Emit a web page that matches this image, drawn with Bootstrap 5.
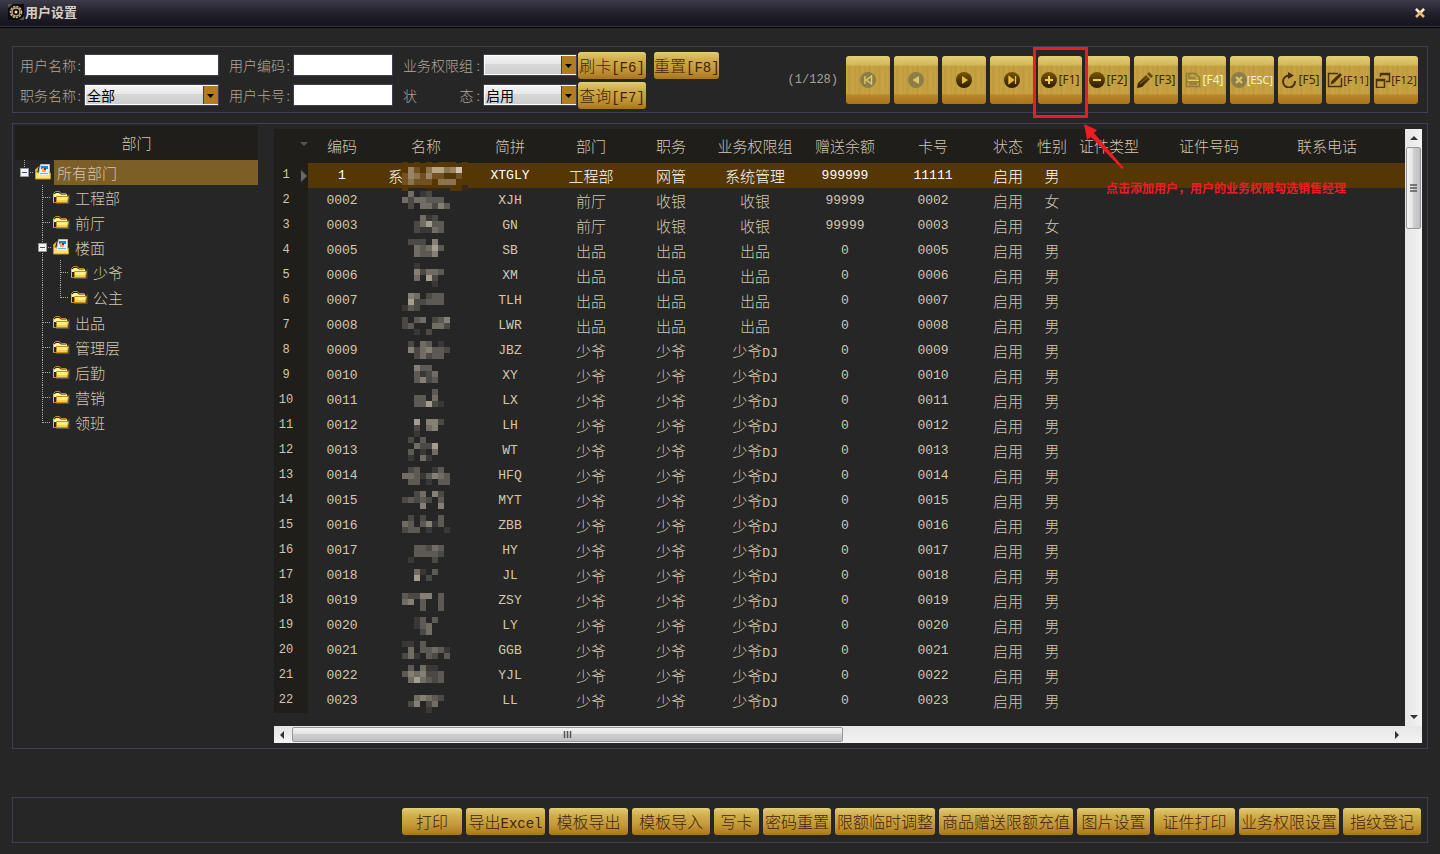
<!DOCTYPE html>
<html lang="zh-CN">
<head>
<meta charset="utf-8">
<meta name="viewport" content="width=device-width, initial-scale=1">
<title>用户设置</title>
<link href="https://cdn.jsdelivr.net/npm/bootstrap@5.3.0/dist/css/bootstrap.min.css" rel="stylesheet">
<style>
:root{--edge:#403d54;--ink:#d3c6b0;--panel:#262626;--dark:#1f1e1a}
body{background:var(--panel);color:var(--ink);font-family:"Noto Sans CJK SC",sans-serif;font-size:15px;font-weight:300;line-height:25px;min-height:100vh}
.titlebar{height:28px;background:linear-gradient(#3d3b49,#22202c 50%,#14131c);border-bottom:1px solid #000;box-shadow:inset 0 -1px #383645;padding:0 12px 4px 8px}
.titlebar h1{font-size:13px;line-height:20px;font-weight:700;color:#d8cec4;margin:0 0 0 1px}
.close-x{border:0;background:none;padding:0;line-height:0}
.frame{border:1px solid var(--edge)}
.frame-filter{margin:18px 12px 0;padding:4px 9px 3px 7px}
.fields{display:grid;grid-template-columns:209px 174px 175px auto;row-gap:2px}
.field{display:flex;align-items:center;height:28px;margin-right:10px}
.field.wide{margin-right:1px}
.field label{color:#b0a69b;font-size:14px;line-height:20px;display:flex;justify-content:space-between;padding-right:3px;width:64px;flex:none;white-space:nowrap}
.field.wide label{width:80px}
.field input,.field select{flex:1;min-width:0;height:22px;border:1px solid var(--edge);border-radius:0;background-color:#fff;color:#000;font-size:14px;line-height:18px;padding:0 2px;outline:0}
.field select{appearance:none;background:url("data:image/svg+xml,%3Csvg xmlns='http://www.w3.org/2000/svg' width='15' height='20'%3E%3Cpath fill='%23b27d22' d='M1 0h14v20H1z'/%3E%3Cpath fill='%23403d54' d='M0 0h1v20H0z'/%3E%3Cpath d='M4 9h7l-3.500 4z'/%3E%3C/svg%3E") right center no-repeat,linear-gradient(#f4f4f4,#e8e8e8 45%,#d8d8d8 46%,#cdcdcd);box-shadow:inset 1px 1px #fff,inset 0 -1px #fff}
.gold{border:0;border-radius:3px;padding:0;color:#43230a;font-size:16px;font-weight:300;line-height:27px;height:27px;white-space:nowrap;background:linear-gradient(#e0cb70,#cfac49 30%,#c39a3b 62%,#ab7517);box-shadow:inset 0 1px #e9da8e55}
.gold small,.latin{font-family:"Liberation Mono",monospace;font-size:14px;line-height:1;font-weight:400}
.gold:hover{filter:brightness(1.1)}
.b-45{width:45px}.b-60{width:60px}.b-65{width:65px}.b-68{width:68px}.b-73{width:73px}.b-78{width:78px}.b-79{width:79px}.b-81{width:81px}.b-100{width:100px}.b-134{width:134px}
.tool{width:44px;height:48px;border:0;border-radius:3px;padding:0;display:flex;align-items:center;justify-content:center;gap:2px;white-space:nowrap;color:#43230a;font:12px/16px "Noto Sans",sans-serif;background:linear-gradient(#e3cf76,#d3b858 18%,transparent 22%,transparent 78%,#b98528 82%,#ab7517),repeating-linear-gradient(90deg,#c5a143 0 2px,#bf9a3d 3px 4px,#c6a243 5px 8px,#c19c3f 9px 10px)}
.tool svg,.titlebar svg{width:16px;height:16px;flex:none}
.tool:disabled{color:#f4f0e6}
.tool:disabled svg{opacity:.8}
.tool.tight{gap:0;font-size:11px}
.counter{font-family:"Liberation Mono",monospace;font-size:12px;color:#aaa095}
.note-box{position:absolute;left:-5px;top:-9px;width:55px;height:71px;border:3px solid #ed1c24;pointer-events:none;z-index:3}
.note-arrow{position:absolute;left:46px;top:68px;width:42px;height:48px;z-index:3;pointer-events:none}
.note-text{position:absolute;left:68px;top:123px;z-index:3;color:#ed1c24;font:700 12px/18px "Noto Sans CJK SC",sans-serif;white-space:nowrap}
.frame-main{margin:10px 12px 0}
.tree{width:243px;margin:2px 16px 0 2px;flex:none}
.tree h2{background:var(--dark);font-size:15px;line-height:34px;height:34px;margin:0;font-weight:300;text-align:center}
.tree li{display:flex;height:25px}
.tree li>svg{width:18px;height:25px;flex:none}
.tree li>svg.fold{width:21px}
.tree a{color:inherit;text-decoration:none;padding-left:3px;flex:1}
.tree a.on{background:#7e5e27}
.data-pane{margin:5px 5px 5px 0;min-width:0}
.grid-wrap{padding-bottom:13px}
.grid{table-layout:fixed;margin:0;color:var(--ink);text-align:center}
.grid>:not(caption)>*>*{padding:0;border:0;background:transparent;color:inherit;box-shadow:none;height:25px;line-height:25px;white-space:nowrap;font-weight:300;vertical-align:middle}
.grid thead tr>th{height:34px;line-height:34px;background:var(--dark)}
.grid tbody tr>th{background:var(--dark);text-align:left;position:relative;font-family:"Liberation Mono",monospace;font-size:12px}
.grid th .num{display:inline-block;width:24px;text-align:center}
.grid tbody tr.sel>td{background:#553605;color:#fff}
.grid .latin{font-size:13px}
.grid tr>td.masked{position:relative;text-align:left;padding-left:12px}
.masked svg{position:absolute;left:0;top:0;width:100px;height:25px;overflow:visible;z-index:1}
.marker{position:absolute;left:26px;top:6px;width:8px;height:14px}
.vbar{width:17px;flex:none;background:linear-gradient(90deg,#e6e6e6,#f3f3f3)}
.hbar{height:17px;background:linear-gradient(#e6e6e6,#f3f3f3)}
.vbar svg,.hbar svg{width:17px;height:17px;flex:none;display:block}
.thumb-v{height:82px;margin:1px;border:1px solid #979797;border-radius:2px;background:linear-gradient(90deg,#f5f5f5,#e2e2e2 48%,#cfcfd1 50%,#c0c0c4)}
.thumb-h{width:48%;margin:1px;border:1px solid #979797;border-radius:2px;background:linear-gradient(#f5f5f5,#e2e2e2 48%,#cfcfd1 50%,#c0c0c4)}
.frame-actions{margin:48px 12px 10px;padding:10px 6px 7px}
</style>
</head>
<body>
<svg class="position-absolute" width="0" height="0" aria-hidden="true">
  <defs>
    <linearGradient id="disc" x2="0" y2="1"><stop stop-color="#785600"/><stop offset="1" stop-color="#2e1b00"/></linearGradient>
  </defs>
  <symbol id="folder" viewBox="0 0 21 25"><path d="M5 18.500h13V9" fill="none" stroke="#555"/><path d="M2.500 17.500v-9l2-2h4l1.500 2h5l1 2v7z" fill="#262626" stroke="#c68a14"/><path d="M3 9.500l2-1.500h3l2 1.500h6V12H3z" fill="#fff3a0"/><path d="M2.500 9v8.500" stroke="#f0b32a"/><path d="M5.500 17.500v-6h12l-1 6z" fill="#ffef83" stroke="#c98b12"/><path d="M6 15h10v2H6z" fill="#f7cf4e"/></symbol>
  <symbol id="dept" viewBox="0 0 21 25"><path d="M2.500 19V9.500l3-2.500" fill="#e7b93d" stroke="#d69c1e"/><path d="M7.500 4.500h9v10h-11z" fill="#eee" stroke="#bbb"/><path d="M8 6h7v3H8z" fill="#1787d8"/><path d="M9 8h4v4H9z" fill="#f6a56a"/><path d="M11 8h2v2h-2z" fill="#a22"/><path d="M2.500 11.500l3 1.500h12v6h-15z" fill="#ffe477" stroke="#cb921a"/><path d="M6 12h10v3H6z" fill="#e8f4fb"/><path d="M7 13h8v1H7z" fill="#5cb6f0"/></symbol>
  <symbol id="g-tee" viewBox="0 0 18 25"><path d="M9.500 0v25M10 12.500h8" fill="none" stroke="#aaa" stroke-dasharray="1 1"/></symbol>
  <symbol id="g-end" viewBox="0 0 18 25"><path d="M9.500 0v13M10 12.500h8" fill="none" stroke="#aaa" stroke-dasharray="1 1"/></symbol>
  <symbol id="g-pass" viewBox="0 0 18 25"><path d="M9.500 0v25" fill="none" stroke="#aaa" stroke-dasharray="1 1"/></symbol>
  <symbol id="g-root" viewBox="0 0 18 25"><path d="M9.500 0v8M15 12.500h3" fill="none" stroke="#aaa" stroke-dasharray="1 1"/><path d="M5.500 8.500h8v8h-8z" fill="#f4f4f4" stroke="#999"/><path d="M7 12.500h5" stroke="#2d4fa5"/></symbol>
  <symbol id="g-open" viewBox="0 0 18 25"><path d="M9.500 0v25M15 12.500h3" fill="none" stroke="#aaa" stroke-dasharray="1 1"/><path d="M5.500 8.500h8v8h-8z" fill="#f4f4f4" stroke="#999"/><path d="M7 12.500h5" stroke="#2d4fa5"/></symbol>
</svg>

<header class="titlebar d-flex align-items-center justify-content-between">
  <div class="d-flex align-items-center">
    <svg viewBox="0 0 16 16"><path fill="#0d0d10" d="M0 0h16v16H0z"/><path d="M0 4L5 0H0zM16 12l-5 4h5z" fill="#55545a"/><circle cx="8" cy="8" r="5.500" fill="none" stroke="#d5b98e" stroke-width="1.500" stroke-dasharray="2.200 1"/><circle cx="8" cy="8" r="4" fill="none" stroke="#c9a777" stroke-width="1.500"/><circle cx="8" cy="8" r="1.500" fill="#f3e4c4"/></svg>
    <h1>用户设置</h1>
  </div>
  <button class="close-x" type="button" aria-label="关闭"><svg viewBox="0 0 16 16"><path d="M4 5l8 8M12 5l-8 8" stroke="#e9ba78" stroke-width="2.500"/><path d="M4 5l3 3M12 5l-3 3" stroke="#fff0cf" stroke-width="2"/></svg></button>
</header>

<section class="frame frame-filter d-flex align-items-center justify-content-between">
  <form class="fields" onsubmit="return false">
    <div class="field"><label for="uname">用户名称<span>:</span></label><input id="uname" type="text"></div>
    <div class="field"><label for="ucode">用户编码<span>:</span></label><input id="ucode" type="text"></div>
    <div class="field wide"><label for="ugroup">业务权限组<span>:</span></label><select id="ugroup"><option></option><option>系统管理</option><option>收银</option></select></div>
    <div class="d-flex align-items-center gap-2"><button class="gold b-68" type="button">刷卡<small>[F6]</small></button><button class="gold b-65" type="button">重置<small>[F8]</small></button></div>
    <div class="field"><label for="ujob">职务名称<span>:</span></label><select id="ujob"><option>全部</option><option>收银</option></select></div>
    <div class="field"><label for="ucard">用户卡号<span>:</span></label><input id="ucard" type="text"></div>
    <div class="field wide"><label for="ustate"><span>状</span><span>态 :</span></label><select id="ustate"><option>启用</option><option>停用</option></select></div>
    <div class="d-flex align-items-center"><button class="gold b-68" type="submit">查询<small>[F7]</small></button></div>
  </form>
  <div class="d-flex align-items-center gap-1">
    <span class="counter me-1">(1/128)</span>
    <button class="tool" type="button" disabled aria-label="首条"><svg viewBox="0 0 16 16"><circle cx="8" cy="8" r="8" fill="#807649"/><path d="M5 4v8M11.500 4v8L6.500 8z" fill="none" stroke="#e5cf79" stroke-width="1.500"/></svg></button>
    <button class="tool" type="button" disabled aria-label="上一条"><svg viewBox="0 0 16 16"><circle cx="8" cy="8" r="8" fill="#807649"/><path d="M11 4v8L4.500 8z" fill="#e5cf79"/></svg></button>
    <button class="tool" type="button" aria-label="下一条"><svg viewBox="0 0 16 16"><circle cx="8" cy="8" r="8" fill="url(#disc)"/><path d="M6 4v8l6-4z" fill="#e6bd42"/></svg></button>
    <button class="tool" type="button" aria-label="末条"><svg viewBox="0 0 16 16"><circle cx="8" cy="8" r="8" fill="url(#disc)"/><path d="M11.500 4v8M5 4.500v7L9.500 8z" fill="#e6bd42" stroke="#e6bd42" stroke-width="1.300"/></svg></button>
    <div class="position-relative">
      <button class="tool" type="button"><svg viewBox="0 0 16 16"><circle cx="8" cy="8" r="8" fill="url(#disc)"/><path d="M8 4v8M4 8h8" stroke="#f2cd4c" stroke-width="2"/></svg>[F1]</button>
      <span class="note-box"></span>
      <svg class="note-arrow" viewBox="0 0 42 48"><path d="M0 0l13 6-3 3 30 35-2 1L7 13l-4 3z" fill="#ed1c24"/></svg>
      <span class="note-text">点击添加用户，用户的业务权限勾选销售经理</span>
    </div>
    <button class="tool" type="button"><svg viewBox="0 0 16 16"><circle cx="8" cy="8" r="8" fill="url(#disc)"/><path d="M4 8h8" stroke="#f2cd4c" stroke-width="2"/></svg>[F2]</button>
    <button class="tool" type="button"><svg viewBox="0 0 16 16"><path d="M0 16l1-5 8-8 4 4-8 8zM10 2l2-2 4 4-2 2z" fill="url(#disc)"/><path d="M3 12l8-7" stroke="#8d7018"/></svg>[F3]</button>
    <button class="tool" type="button" disabled><svg viewBox="0 0 16 16"><path d="M1.500 1.500h9l4 4v9h-13zM4 2v4h6M2 10h12M4 12h8" fill="none" stroke="#80733f" stroke-width="1.500"/><path d="M3 8.500h11" stroke="#f0da79"/></svg>[F4]</button>
    <button class="tool tight" type="button" disabled><svg viewBox="0 0 16 16"><circle cx="8" cy="8" r="8" fill="#807649"/><path d="M5 5l6 6M11 5l-6 6" stroke="#e5cf79" stroke-width="2"/></svg>[ESC]</button>
    <button class="tool" type="button"><svg viewBox="0 0 16 16"><path d="M8 3.500A6 6 0 1 0 14 9" fill="none" stroke="#4a3000" stroke-width="2"/><path d="M7 0l6 3.500L7 7z" fill="#4a3000"/></svg>[F5]</button>
    <button class="tool tight" type="button"><svg viewBox="0 0 16 16"><path d="M14.500 6v8.500h-13v-13H11" fill="none" stroke="#4a3000" stroke-width="1.500"/><path d="M3.500 12.500l1-3.500L13 1l2 2-8.500 8.500z" fill="#4a3000"/></svg>[F11]</button>
    <button class="tool tight" type="button"><svg viewBox="0 0 16 16"><path d="M5.500 5V1.500h9v8H11M5 2.500h10M1.500 7.500h8v8h-8zM1 8.500h9" fill="none" stroke="#4a3000" stroke-width="1.500"/></svg>[F12]</button>
  </div>
</section>

<main class="frame frame-main d-flex">
  <nav class="tree" aria-label="部门">
    <h2>部门</h2>
    <ul class="list-unstyled mb-0" id="tree"></ul>
  </nav>
  <div class="data-pane flex-grow-1 d-flex flex-column">
    <div class="d-flex flex-grow-1">
      <div class="grid-wrap flex-grow-1 overflow-hidden">
        <table class="table table-borderless grid">
          <colgroup id="cols"></colgroup>
          <thead><tr id="heads"></tr></thead>
          <tbody id="rows"></tbody>
        </table>
      </div>
      <div class="vbar d-flex flex-column">
        <svg viewBox="0 0 17 17"><path d="M5 11l4-4 4 4z" fill="#333"/></svg>
        <div class="thumb-v d-flex align-items-center"><svg viewBox="0 0 17 17"><path d="M3 5h7M3 8h7M3 11h7" stroke="#555" stroke-width="1.500"/></svg></div>
        <svg class="mt-auto" viewBox="0 0 17 17"><path d="M5 6l4 4 4-4z" fill="#333"/></svg>
      </div>
    </div>
    <div class="hbar d-flex">
      <svg viewBox="0 0 17 17"><path d="M10 5l-4 4 4 4z" fill="#333"/></svg>
      <div class="thumb-h d-flex justify-content-center"><svg viewBox="0 0 17 17"><path d="M5.500 3v7M8.500 3v7M11.500 3v7" stroke="#555" stroke-width="1.500"/></svg></div>
      <svg class="ms-auto me-3" viewBox="0 0 17 17"><path d="M6 5l4 4-4 4z" fill="#333"/></svg>
    </div>
  </div>
</main>

<footer class="frame frame-actions d-flex justify-content-end gap-1">
  <button class="gold b-60" type="button">打印</button>
  <button class="gold b-79" type="button">导出<small>Excel</small></button>
  <button class="gold b-79" type="button">模板导出</button>
  <button class="gold b-78" type="button">模板导入</button>
  <button class="gold b-45" type="button">写卡</button>
  <button class="gold b-68" type="button">密码重置</button>
  <button class="gold b-100" type="button">限额临时调整</button>
  <button class="gold b-134" type="button">商品赠送限额充值</button>
  <button class="gold b-73" type="button">图片设置</button>
  <button class="gold b-81" type="button">证件打印</button>
  <button class="gold b-100" type="button">业务权限设置</button>
  <button class="gold b-78" type="button">指纹登记</button>
</footer>

<script>
// Department tree: guide cells, icon, label
const tree = [
  ['root', 'dept', '所有部门'], [' tee', 'folder', '工程部'], [' tee', 'folder', '前厅'], [' open', 'dept', '楼面'],
  [' pass tee', 'folder', '少爷'], [' pass end', 'folder', '公主'], [' tee', 'folder', '出品'], [' tee', 'folder', '管理层'],
  [' tee', 'folder', '后勤'], [' tee', 'folder', '营销'], [' end', 'folder', '领班']
];
document.getElementById('tree').innerHTML = tree.map(([g, icon, name], i) =>
  '<li>' + g.split(' ').map(c => `<svg>${c ? `<use href="#g-${c}"/>` : ''}</svg>`).join('') +
  `<svg class="fold"><use href="#${icon}"/></svg><a href="#"${i ? '' : ' class="on"'}>${name}</a></li>`).join('');

// User table
const cols = [['', 34], ['编码', 68], ['名称', 100], ['简拼', 68], ['部门', 94], ['职务', 66], ['业务权限组', 102], ['赠送余额', 78],
  ['卡号', 98], ['状态', 52], ['性别', 36], ['证件类型', 78], ['证件号码', 122], ['联系电话', 114], ['', 0]];
document.getElementById('cols').innerHTML = cols.map(c => c[1] ? `<col style="width:${c[1]}px">` : '<col>').join('');
document.getElementById('heads').innerHTML = cols.map((c, i) =>
  `<th scope="col">${i ? c[0] : '<svg width="8" height="5" viewBox="0 0 8 5" class="d-block ms-auto mb-1"><path d="M0 0h8L4 4z" fill="#555"/></svg>'}</th>`).join('');

// Hidden names are drawn as 6px tiles: first tile row's offset, then one string of shades per tile row
const users = [
  ['1', 'XTGLY', 4, '.ac.bddbae|cabcacc..c|cbccc.bbb.'],
  ['0002', 'XJH', 3, '.4.12...|4244333.|.2.44253'],
  ['0003', 'GN', 2, '...412..|..24633.|..21143.'],
  ['0005', 'SB', 1, '.222.5..|..43463.|..4335..'],
  ['0006', 'XM', 0, '..1.....|..52443.|..4.62..|.....1..'],
  ['0007', 'TLH', 5, '.54.233.|.622333.|132.....'],
  ['0008', 'LWR', 4, '2.34.235|23...442|..1.2...'],
  ['0009', 'JBZ', 3, '.2.43.1.|.5245332|..24233.'],
  ['0010', 'XY', 2, '..533...|..3124..|..3523..'],
  ['0011', 'LX', 1, '.....3..|..33.4..|..33621.'],
  ['0012', 'LH', 6, '..6.552.|..2.45..|..1.....'],
  ['0013', 'WT', -1, '.2.3....|..4226..|.3.1.4..|.1.41...'],
  ['0014', 'HFQ', 4, '.23..13.|44313543|.33.1.33'],
  ['0015', 'MYT', 3, '..24.52.|23232.3.|...5..5.'],
  ['0016', 'ZBB', 2, '.2.2..3.|43.3513.|233.1..1'],
  ['0017', 'HY', 7, '..33243.|..33332.|.1...2..'],
  ['0018', 'JL', 6, '..41.3..|..6.2...'],
  ['0019', 'ZSY', 5, '32255.3.|45.3..3.|...3..3.'],
  ['0020', 'LY', 4, '..13.3..|..134...|...24...'],
  ['0021', 'GGB', 3, '11.3....|.4.33431|241.32.3'],
  ['0022', 'YJL', 2, '.3.411..|3545223.|.464323.'],
  ['0023', 'LL', 7, '..45432.|.25.24..|....1...']
];
const shade = {1: '#393836', 2: '#4b4946', 3: '#5d5a55', 4: '#716d65', 5: '#867f76', 6: '#a69d91',
  a: '#9b8564', b: '#8c744c', c: '#735022', d: '#b6a483', e: '#cfc3ae'};
const tiles = (y, art) => art.split('|').map((line, r) => [...line].map((s, c) =>
  shade[s] ? `<rect x="${26 + c * 6}" y="${y + r * 6}" width="6" height="6" fill="${shade[s]}"/>` : '').join('')).join('');
const edge = '<path d="M26-1h6v5h-6zM38-1h6v5h-6zM50-1h6v5h-6zM62-1h18v5h-18zM86-1h6v5h-6zM26 24h6v4h-6zM74 24h12v4h-12z" fill="#553605"/><path d="M50 25h12v3h-12zM86 22h6v6h-6z" fill="#35271a"/>';
const info = i => i === 0 ? ['工程部', '网管', '系统管理', '999999'] : i < 3 ? ['前厅', '收银', '收银', '99999'] :
  i < 7 ? ['出品', '出品', '出品', '0'] : ['少爷', '少爷', '少爷<span class="latin">DJ</span>', '0'];
document.getElementById('rows').innerHTML = users.map(([code, py, y, art], i) => {
  const [dept, job, role, gift] = info(i);
  return `<tr${i ? '' : ' class="sel"'}><th scope="row"><span class="num">${i + 1}</span>${i ? '' : '<svg class="marker" viewBox="0 0 8 14"><path d="M1 1l6 6-6 6z" fill="#686868"/></svg>'}</th>
  <td class="latin">${code}</td><td class="masked">${i ? '' : '系'}<svg>${i ? '' : edge}${tiles(y, art)}</svg></td><td class="latin">${py}</td>
  <td>${dept}</td><td>${job}</td><td>${role}</td><td class="latin">${gift}</td><td class="latin">${i ? code : '11111'}</td>
  <td>启用</td><td>${i === 1 || i === 2 ? '女' : '男'}</td><td></td><td></td><td></td><td></td></tr>`;
}).join('');
</script>
<script src="https://cdn.jsdelivr.net/npm/bootstrap@5.3.0/dist/js/bootstrap.bundle.min.js"></script>
</body>
</html>
